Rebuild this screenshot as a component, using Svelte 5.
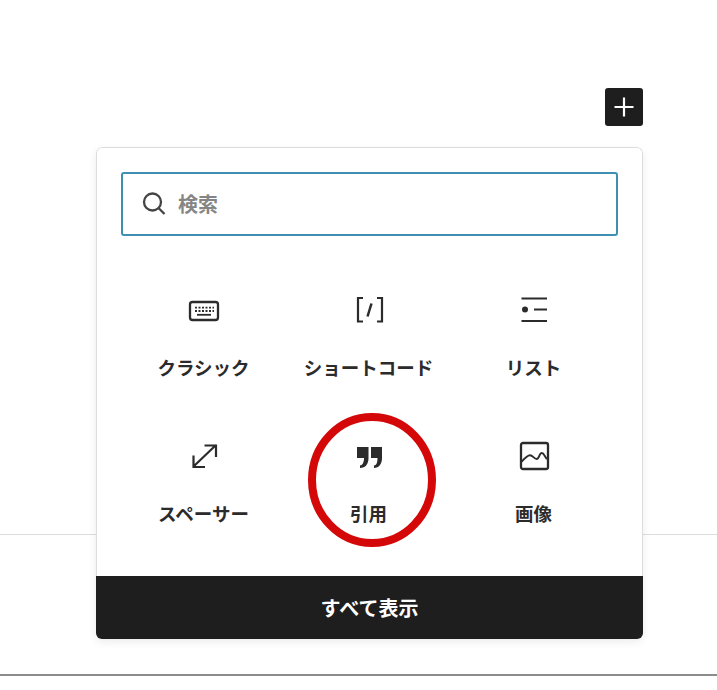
<script lang="ts">
  const blocks = [
    { id: "classic", label: "クラシック" },
    { id: "shortcode", label: "ショートコード" },
    { id: "list", label: "リスト" },
    { id: "spacer", label: "スペーサー" },
    { id: "quote", label: "引用" },
    { id: "image", label: "画像" }
  ];
</script>

<div class="page">
  <hr class="rule light" />
  <hr class="rule dark" />

  <div class="inserter">
    <button class="toggle" aria-label="追加">
      <svg width="24" height="24" viewBox="0 0 24 24"><path d="M12 2.500v19M2.500 12h19" stroke="#fff" stroke-width="2.200" fill="none" /></svg>
    </button>

    <div class="popover">
      <div class="body">
        <div class="search">
          <svg width="26" height="26" viewBox="0 0 26 26" fill="none" stroke="#444" stroke-width="2.300">
            <circle cx="11.500" cy="11" r="8.500" />
            <path d="M17.500 17l6 6" />
          </svg>
          <span class="placeholder">検索</span>
        </div>

        <ul class="grid">
          {#each blocks as block (block.id)}
            <li>
              <span class="icon">
                {#if block.id === "classic"}
                  <svg width="32" height="32" viewBox="0 0 32 32" fill="none" stroke="#2b2b2b">
                    <rect x="2" y="8" width="28" height="18" rx="2.500" stroke-width="2.300" />
                    <path d="M7 13.700h19M7 17h19" stroke-width="1.800" stroke-dasharray="2 1.500" />
                    <path d="M9 20.800h14" stroke-width="1.800" />
                  </svg>
                {:else if block.id === "shortcode"}
                  <svg width="32" height="32" viewBox="0 0 32 32" fill="none" stroke="#2b2b2b" stroke-width="2.200">
                    <path d="M10 4H5v23.500h5M24 4h5v23.500h-5" />
                    <path d="M14.500 22.500l4-13" stroke-width="2.500" />
                  </svg>
                {:else if block.id === "list"}
                  <svg width="32" height="32" viewBox="0 0 32 32" fill="none" stroke="#2b2b2b" stroke-width="2.200">
                    <path d="M3.500 4.500h25.500M16 15.500h13M3.500 27h25.500" />
                    <circle cx="7" cy="15.500" r="3" fill="#2b2b2b" stroke="none" />
                  </svg>
                {:else if block.id === "spacer"}
                  <svg width="32" height="32" viewBox="0 0 32 32" fill="none" stroke="#2b2b2b" stroke-width="2.200">
                    <path d="M5.500 26.500L28 5M16.500 5.500H28V17M5.500 15.500V27H17" />
                  </svg>
                {:else if block.id === "quote"}
                  <svg width="32" height="32" viewBox="0 0 32 32" fill="#2b2b2b">
                    <path d="M4 7h11.500v11c0 6-3 10-8.500 10v-2.500c2.500 0 4-3 4-7.500H4zM18 7h11v11c0 6-3 10-8 10v-2.500c2.500 0 3.500-3 3.500-7.500H18z" />
                  </svg>
                {:else}
                  <svg width="32" height="32" viewBox="0 0 32 32" fill="none" stroke="#2b2b2b" stroke-width="2.300">
                    <rect x="3" y="3" width="27" height="26" rx="2" />
                    <path d="M3.700 21.700c3-3.500 5.500-6.500 8.300-6.500s4 3.800 6.700 3.800 2.500-6 5-6 3 4 5.300 6" stroke-width="1.900" />
                  </svg>
                {/if}
              </span>
              <span class="label">{block.label}</span>
            </li>
          {/each}
        </ul>
      </div>
      <button class="show-all">すべて表示</button>
    </div>

    <svg class="circle" width="136" height="142" viewBox="0 0 136 142">
      <ellipse cx="68" cy="71" rx="60" ry="63" fill="none" stroke="#d40808" stroke-width="8" />
    </svg>
  </div>
</div>

<style>
  :global(body) {
    background: #fff;
    font-family: "Noto Sans CJK JP", "Noto Sans", sans-serif;
  }
  .page {
    position: relative;
    height: 690px;
    overflow: hidden;
  }
  .rule {
    border: 0;
    margin: 0;
    height: 1px;
  }
  .rule.light {
    margin-top: 534px;
    background: #dcdcdc;
  }
  .rule.dark {
    margin-top: 139px;
    height: 2px;
    background: #8c8c8c;
  }
  .inserter {
    position: absolute;
    top: 88px;
    left: 96px;
    width: 547px;
    display: flex;
    flex-direction: column;
    align-items: flex-end;
    gap: 21px;
  }
  .toggle {
    width: 38px;
    height: 38px;
    padding: 0;
    border: 0;
    border-radius: 3px;
    background: #1e1e1e;
    display: flex;
    align-items: center;
    justify-content: center;
  }
  .popover {
    width: 100%;
    height: 492px;
    background: #fff;
    border-radius: 6px;
    box-shadow: 0 3px 8px rgba(0, 0, 0, 0.08);
    display: flex;
    flex-direction: column;
    overflow: hidden;
  }
  .body {
    flex: 1;
    min-height: 0;
    padding: 24px 24px 0;
    border: 1px solid #ddd;
    border-bottom: 0;
    border-radius: 6px 6px 0 0;
  }
  .search {
    box-sizing: border-box;
    height: 64px;
    border: 2px solid #3f8fb3;
    border-radius: 3px;
    display: flex;
    align-items: center;
    gap: 11px;
    padding-left: 18px;
  }
  .placeholder {
    font-size: 20px;
    line-height: 28px;
    font-weight: 700;
    color: #858585;
  }
  .grid {
    list-style: none;
    margin: 0;
    padding: 0;
    display: grid;
    grid-template-columns: repeat(3, 165px);
    grid-auto-rows: 146px;
    padding-top: 58px;
  }
  li {
    display: flex;
    flex-direction: column;
    align-items: center;
  }
  .icon {
    width: 32px;
    height: 32px;
    display: block;
  }
  .icon svg {
    display: block;
  }
  .label {
    margin-top: 28px;
    font-size: 18.500px;
    line-height: 26px;
    font-weight: 700;
    color: #2b2b2b;
    white-space: nowrap;
  }
  .show-all {
    height: 63px;
    flex: none;
    border: 0;
    background: #1e1e1e;
    color: #fff;
    font: 700 20px "Noto Sans CJK JP", "Noto Sans", sans-serif;
  }
  .circle {
    position: absolute;
    left: 208px;
    top: 321px;
  }
</style>
